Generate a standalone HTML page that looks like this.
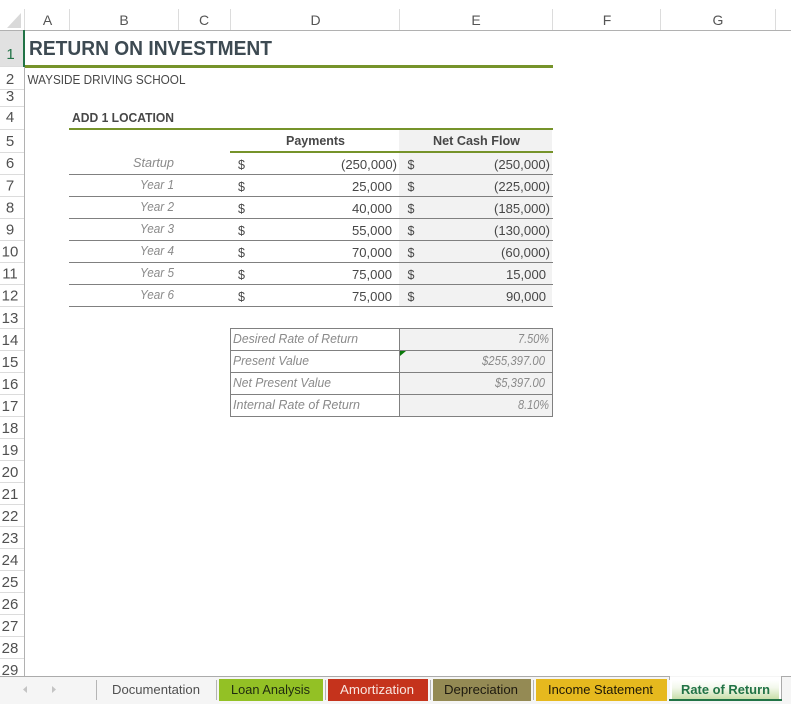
<!DOCTYPE html>
<html><head><meta charset="utf-8"><title>Return on Investment</title>
<style>
html,body{margin:0;padding:0;background:#fff;width:791px;height:704px;overflow:hidden}
svg{display:block;font-family:"Liberation Sans",sans-serif}
.h{font-size:14px;fill:#555;text-anchor:middle}
.r{font-size:15px;fill:#505050;text-anchor:middle}
.c{font-size:12.5px;fill:#474747}
.i{font-size:12.5px;font-style:italic;fill:#8a8a8a}
.t{font-size:13px}
</style></head><body>
<svg width="791" height="704" viewBox="0 0 791 704" xmlns="http://www.w3.org/2000/svg">
<rect width="791" height="704" fill="#fff"/>
<!-- fills -->
<rect x="399" y="130" width="153" height="176" fill="#f2f2f2"/>
<rect x="400" y="329" width="152" height="87" fill="#f2f2f2"/>
<rect x="0" y="31" width="23" height="35" fill="#e1e1e1"/>
<!-- column header -->
<polygon points="21,13 21,28 7,28" fill="#d9d9d9"/>
<g stroke="#dcdcdc" stroke-width="1">
<path d="M24.5 9V30M69.5 9V30M178.5 9V30M230.5 9V30M399.5 9V30M552.5 9V30M660.5 9V30M775.5 9V30"/>
</g>
<rect x="0" y="30" width="791" height="1" fill="#b1b1b1"/>
<text class="h" x="47.5" y="25">A</text><text class="h" x="124" y="25">B</text><text class="h" x="204" y="25">C</text><text class="h" x="315.5" y="25">D</text><text class="h" x="476" y="25">E</text><text class="h" x="607" y="25">F</text><text class="h" x="718" y="25">G</text>
<!-- row header lines -->
<path stroke="#dcdcdc" d="M0 66.5H24M0 89.5H24M0 106.5H24M0 129.5H24M0 152.5H24M0 174.5H24M0 196.5H24M0 218.5H24M0 240.5H24M0 262.5H24M0 284.5H24M0 306.5H24M0 328.5H24M0 350.5H24M0 372.5H24M0 394.5H24M0 416.5H24M0 438.5H24M0 460.5H24M0 482.5H24M0 504.5H24M0 526.5H24M0 548.5H24M0 570.5H24M0 592.5H24M0 614.5H24M0 636.5H24M0 658.5H24"/>
<rect x="24" y="30" width="1" height="646" fill="#b1b1b1"/>
<rect x="23" y="30" width="2" height="37" fill="#217346"/>
<text class="r" x="10.5" y="59" style="fill:#217346">1</text>
<text class="r" x="10" y="84">2</text><text class="r" x="10" y="101">3</text><text class="r" x="10" y="122">4</text><text class="r" x="10" y="146">5</text><text class="r" x="10" y="168">6</text><text class="r" x="10" y="190.5">7</text><text class="r" x="10" y="212.5">8</text><text class="r" x="10" y="234.5">9</text><text class="r" x="10" y="256.5">10</text><text class="r" x="10" y="278.5">11</text><text class="r" x="10" y="300.5">12</text><text class="r" x="10" y="323">13</text><text class="r" x="10" y="345">14</text><text class="r" x="10" y="367">15</text><text class="r" x="10" y="389">16</text><text class="r" x="10" y="411">17</text><text class="r" x="10" y="433">18</text><text class="r" x="10" y="455">19</text><text class="r" x="10" y="477">20</text><text class="r" x="10" y="499">21</text><text class="r" x="10" y="521">22</text><text class="r" x="10" y="543">23</text><text class="r" x="10" y="565">24</text><text class="r" x="10" y="587">25</text><text class="r" x="10" y="609">26</text><text class="r" x="10" y="631">27</text><text class="r" x="10" y="653">28</text><text class="r" x="10" y="675">29</text>
<!-- titles -->
<text x="29" y="55" font-size="20" font-weight="bold" fill="#3d4a52" textLength="243" lengthAdjust="spacingAndGlyphs">RETURN ON INVESTMENT</text>
<rect x="25" y="65" width="528" height="3" fill="#76932a"/>
<text class="c" x="27.5" y="84" textLength="158" lengthAdjust="spacingAndGlyphs">WAYSIDE DRIVING SCHOOL</text>
<text class="c" x="72" y="122" font-weight="bold" textLength="102" lengthAdjust="spacingAndGlyphs">ADD 1 LOCATION</text>
<rect x="69" y="128" width="484" height="2" fill="#76932a"/>
<rect x="230" y="151" width="323" height="2" fill="#76932a"/>
<text class="c" x="286" y="145" font-weight="bold" textLength="59" lengthAdjust="spacingAndGlyphs">Payments</text>
<text class="c" x="433" y="145" font-weight="bold" textLength="87" lengthAdjust="spacingAndGlyphs">Net Cash Flow</text>
<!-- row rules -->
<path stroke="#808080" d="M69 174.5H553M69 196.5H553M69 218.5H553M69 240.5H553M69 262.5H553M69 284.5H553M69 306.5H553"/>
<!-- years -->
<text class="i" x="133" y="167" textLength="41" lengthAdjust="spacingAndGlyphs">Startup</text>
<text class="i" x="140" y="189" textLength="34" lengthAdjust="spacingAndGlyphs">Year 1</text>
<text class="i" x="140" y="211" textLength="34" lengthAdjust="spacingAndGlyphs">Year 2</text>
<text class="i" x="140" y="233" textLength="34" lengthAdjust="spacingAndGlyphs">Year 3</text>
<text class="i" x="140" y="255" textLength="34" lengthAdjust="spacingAndGlyphs">Year 4</text>
<text class="i" x="140" y="277" textLength="34" lengthAdjust="spacingAndGlyphs">Year 5</text>
<text class="i" x="140" y="299" textLength="34" lengthAdjust="spacingAndGlyphs">Year 6</text>
<!-- dollars -->
<g font-size="12.5" fill="#474747">
<text x="238" y="169">$</text><text x="238" y="191">$</text><text x="238" y="213">$</text><text x="238" y="235">$</text><text x="238" y="257">$</text><text x="238" y="279">$</text><text x="238" y="301">$</text>
<text x="407.5" y="169">$</text><text x="407.5" y="191">$</text><text x="407.5" y="213">$</text><text x="407.5" y="235">$</text><text x="407.5" y="257">$</text><text x="407.5" y="279">$</text><text x="407.5" y="301">$</text>
</g>
<!-- payments -->
<text class="c" x="341" y="169" textLength="56" lengthAdjust="spacingAndGlyphs">(250,000)</text>
<text class="c" x="352" y="191" textLength="40" lengthAdjust="spacingAndGlyphs">25,000</text>
<text class="c" x="352" y="213" textLength="40" lengthAdjust="spacingAndGlyphs">40,000</text>
<text class="c" x="352" y="235" textLength="40" lengthAdjust="spacingAndGlyphs">55,000</text>
<text class="c" x="352" y="257" textLength="40" lengthAdjust="spacingAndGlyphs">70,000</text>
<text class="c" x="352" y="279" textLength="40" lengthAdjust="spacingAndGlyphs">75,000</text>
<text class="c" x="352" y="301" textLength="40" lengthAdjust="spacingAndGlyphs">75,000</text>
<!-- net cash -->
<text class="c" x="494" y="169" textLength="56" lengthAdjust="spacingAndGlyphs">(250,000)</text>
<text class="c" x="494" y="191" textLength="56" lengthAdjust="spacingAndGlyphs">(225,000)</text>
<text class="c" x="494" y="213" textLength="56" lengthAdjust="spacingAndGlyphs">(185,000)</text>
<text class="c" x="494" y="235" textLength="56" lengthAdjust="spacingAndGlyphs">(130,000)</text>
<text class="c" x="501" y="257" textLength="49" lengthAdjust="spacingAndGlyphs">(60,000)</text>
<text class="c" x="506" y="279" textLength="40" lengthAdjust="spacingAndGlyphs">15,000</text>
<text class="c" x="506" y="301" textLength="40" lengthAdjust="spacingAndGlyphs">90,000</text>
<!-- summary table -->
<path stroke="#808080" fill="none" d="M230.5 328.5H552.5V416.5H230.5ZM230.5 350.5H552.5M230.5 372.5H552.5M230.5 394.5H552.5M399.5 328.5V416.5"/>
<polygon points="400,351 406,351 400,356" fill="#0a7a0a"/>
<text class="i" x="233" y="343" textLength="125" lengthAdjust="spacingAndGlyphs">Desired Rate of Return</text>
<text class="i" x="233" y="365" textLength="76" lengthAdjust="spacingAndGlyphs">Present Value</text>
<text class="i" x="233" y="387" textLength="98" lengthAdjust="spacingAndGlyphs">Net Present Value</text>
<text class="i" x="233" y="409" textLength="127" lengthAdjust="spacingAndGlyphs">Internal Rate of Return</text>
<text class="i" x="518" y="343" textLength="31" lengthAdjust="spacingAndGlyphs">7.50%</text>
<text class="i" x="482" y="365" textLength="63" lengthAdjust="spacingAndGlyphs">$255,397.00</text>
<text class="i" x="495" y="387" textLength="50" lengthAdjust="spacingAndGlyphs">$5,397.00</text>
<text class="i" x="518" y="409" textLength="31" lengthAdjust="spacingAndGlyphs">8.10%</text>
<!-- tab bar -->
<rect x="0" y="676" width="791" height="28" fill="#f5f5f5"/>
<rect x="0" y="676" width="670" height="1" fill="#ababab"/>
<rect x="781" y="676" width="10" height="1" fill="#ababab"/>
<rect x="669" y="676" width="1" height="4" fill="#ababab"/>
<rect x="781" y="676" width="1" height="24" fill="#ababab"/>
<polygon points="27,686 27,693 23,689.5" fill="#c4c4c4"/>
<polygon points="52,686 52,693 56,689.5" fill="#c4c4c4"/>
<path stroke="#b5b5b5" d="M96.5 680V700M216.5 680V700M325.5 680V700M430.5 680V700M533.500 680V700"/>
<text class="t" x="112" y="694" fill="#505050" textLength="88" lengthAdjust="spacingAndGlyphs">Documentation</text>
<rect x="219" y="679" width="104" height="22" fill="#93c125"/>
<text class="t" x="231" y="694" fill="#1f2a10" textLength="79" lengthAdjust="spacingAndGlyphs">Loan Analysis</text>
<rect x="328" y="679" width="100" height="22" fill="#c5331c"/>
<text class="t" x="340" y="694" fill="#f8e6e0" textLength="74" lengthAdjust="spacingAndGlyphs">Amortization</text>
<rect x="433" y="679" width="98" height="22" fill="#948a54"/>
<text class="t" x="444" y="694" fill="#1e1a10" textLength="74" lengthAdjust="spacingAndGlyphs">Depreciation</text>
<rect x="536" y="679" width="131" height="22" fill="#e6b91e"/>
<text class="t" x="548" y="694" fill="#1e1808" textLength="105" lengthAdjust="spacingAndGlyphs">Income Statement</text>
<defs><linearGradient id="g" x1="0" y1="0" x2="0" y2="1"><stop offset="0" stop-color="#ffffff"/><stop offset="0.4" stop-color="#f3f8ec"/><stop offset="1" stop-color="#c8dfaa"/></linearGradient></defs>
<rect x="670" y="677" width="111" height="23" fill="#fff"/>
<rect x="672" y="680" width="107" height="19" fill="url(#g)"/>
<rect x="669" y="699" width="113" height="2" fill="#217346"/>
<text class="t" x="681" y="694" font-weight="bold" fill="#217346" textLength="89" lengthAdjust="spacingAndGlyphs">Rate of Return</text>
</svg>
</body></html>
